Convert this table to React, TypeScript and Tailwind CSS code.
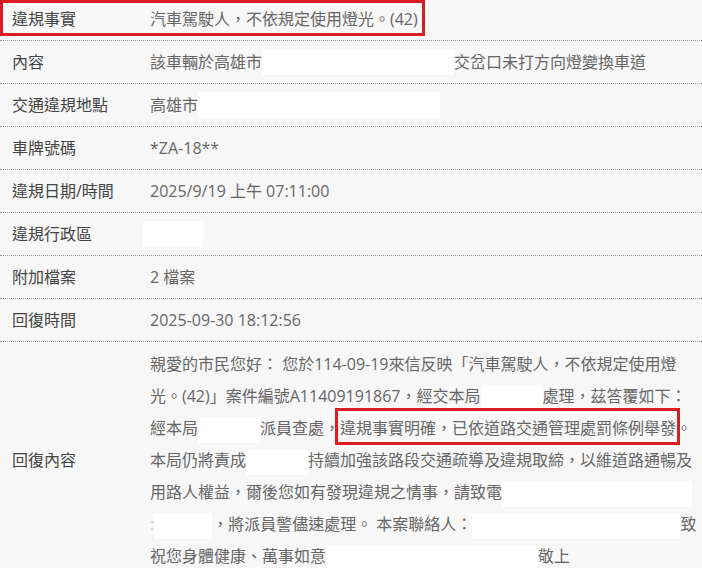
import React from 'react';

function Blank({ className }: { className: string }) {
  return <span className={`inline-block h-[26px] bg-white align-middle ${className}`} />;
}

function Row({ label, children }: { label: string; children: React.ReactNode }) {
  return (
    <div className="grid grid-cols-[138px_1fr] border-b border-dotted border-[#9a9a9a]">
      <div className="flex h-[42px] items-center pl-3 text-[#444]">{label}</div>
      <div className="flex h-[42px] items-center whitespace-nowrap pl-3 text-[#666]">{children}</div>
    </div>
  );
}

const replyLines: React.ReactNode[] = [
  <>親愛的市民您好： 您於114-09-19來信反映「汽車駕駛人，不依規定使用燈</>,
  <>
    光。(42)」案件編號A11409191867，經交本局<Blank className="w-[62px]" />處理，茲答覆如下：
  </>,
  <>
    經本局<Blank className="w-[62px]" />派員查處，
    <span className="relative">
      違規事實明確，已依道路交通管理處罰條例舉發
      <span className="absolute -bottom-[6px] -left-[5px] -right-[4px] -top-[9px] border-[3px] border-[#dd1b22]" />
    </span>
    。
  </>,
  <>
    本局仍將責成<Blank className="w-[62px]" />持續加強該路段交通疏導及違規取締，以維道路通暢及
  </>,
  <>
    用路人權益，爾後您如有發現違規之情事，請致電<Blank className="w-[190px]" />
  </>,
  <>
    <span className="text-[#ccc]">:</span>
    <Blank className="w-[58px]" />，將派員警儘速處理。 本案聯絡人：<Blank className="w-[208px]" />致
  </>,
  <>
    祝您身體健康、萬事如意<Blank className="w-[212px]" />敬上
  </>,
];

export default function App() {
  return (
    <div
      lang="zh-Hant-TW"
      className="h-[568px] w-[702px] overflow-hidden bg-[#f7f7f7] font-['Open_Sans','Noto_Sans_CJK_TC',sans-serif] text-[16px]"
    >
      <div className="relative -mt-[2px]">
        <Row label="違規事實">汽車駕駛人，不依規定使用燈光。(42)</Row>
        <Row label="內容">
          該車輛於高雄市<Blank className="w-[192px]" />交岔口未打方向燈變換車道
        </Row>
        <Row label="交通違規地點">
          高雄市<Blank className="w-[242px]" />
        </Row>
        <Row label="車牌號碼">*ZA-18**</Row>
        <Row label="違規日期/時間">2025/9/19 上午 07:11:00</Row>
        <Row label="違規行政區">
          <Blank className="-ml-[7px] w-[60px]" />
        </Row>
        <Row label="附加檔案">2 檔案</Row>
        <Row label="回復時間">2025-09-30 18:12:56</Row>
        <div className="grid grid-cols-[138px_1fr]">
          <div className="flex items-center pl-3 text-[#444]">回復內容</div>
          <div className="py-[6px] pl-3 text-[#666]">
            {replyLines.map((line, i) => (
              <div key={i} className="h-[32px] whitespace-nowrap leading-[32px]">
                {line}
              </div>
            ))}
          </div>
        </div>
        <div className="absolute left-0 top-[2px] h-[36px] w-[425px] border-[3px] border-[#dd1b22]" />
      </div>
    </div>
  );
}
